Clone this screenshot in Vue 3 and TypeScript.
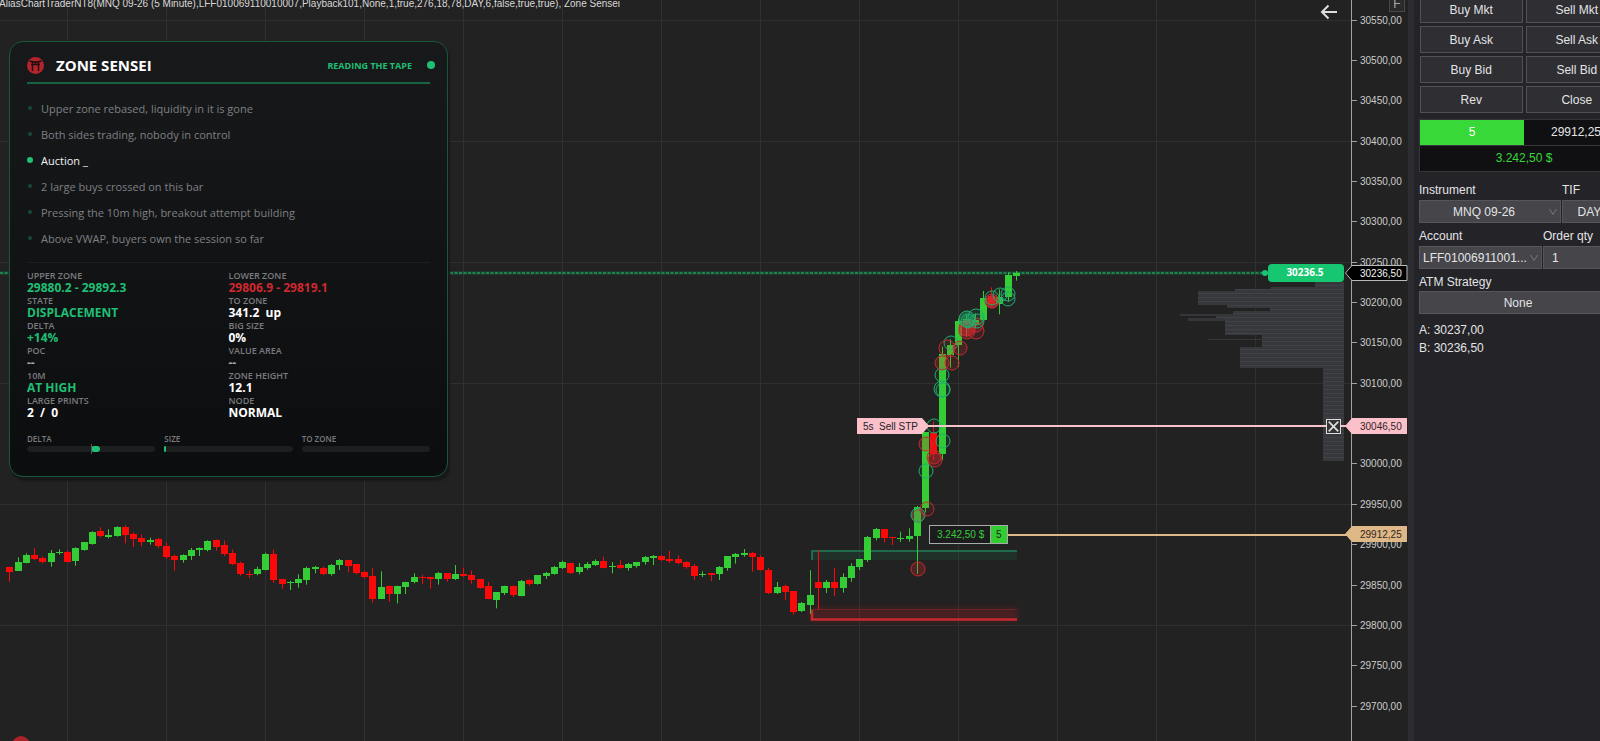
<script setup lang="ts">
import { ref } from 'vue'

type Tone = 'up' | 'down' | 'plain' | 'muted'
interface Bar { i: number; x: number; up: boolean; high: number; top: number; bottom: number; low: number }
interface Print { x: number; y: number; r: number; buy: boolean; fill: number }

/* direction, high, body top, body bottom, low; one entry per bar, in thirds of a pixel below the pane offset */
const paneA = `r 200 201 215 245|g 172 186 212 212|g 160 164 188 190|r 145 164 177 180|r 170 174 186 190|g 150 158 186 200|g 148 156 160 164|r 152 155 186 186|g 142 144 183 197|g 126 126 150 152|g 94 96 132 134|r 82 93 107 112|g 88 104 110 115|g 79 81 107 110|r 76 81 104 130|r 97 101 116 141|r 104 113 126 138|g 113 119 126 134|r 114 118 138 144|r 128 138 172 177|r 164 169 180 212|g 163 164 180 188|g 144 150 167 180|g 142 145 150 168|g 121 122 150 154|r 118 119 141 152|r 122 135 161 168|r 149 158 191 195|r 185 188 222 227|r 212 222 225 234|g 200 206 222 226|g 158 161 209 211|r 149 161 240 248`
const paneB = `r 177 177 192 206|g 182 186 190 210|g 163 177 189 203|g 140 143 180 194|g 138 141 146 160|r 140 143 163 165|g 132 135 163 167|g 117 121 135 150|r 120 120 138 157|r 132 132 160 163|r 152 156 171 176|r 145 168 237 248|g 154 201 237 237|r 197 197 222 245|g 197 197 222 250|g 185 186 200 222|g 160 171 186 190|r 164 172 175 191|r 171 171 177 206|g 156 160 177 194|r 160 160 177 185|g 135 163 178 180|r 143 162 168 171|r 152 165 180 191|r 177 177 203 206|r 186 199 237 238|g 216 216 240 265|g 197 199 219 225|r 197 197 226 231|g 180 183 228 229|r 178 181 192 197|g 165 166 191 194|g 156 160 168 177|g 138 141 162 164|g 122 126 144 147|r 128 129 158 162|g 129 141 155 163|g 126 131 144 149|g 118 122 135 138|r 110 123 143 145|g 126 138 141 160|r 121 135 143 146|g 129 132 144 152|g 126 126 138 143|g 108 111 126 134|g 105 109 114 135|r 106 109 121 123|r 92 118 123 129|r 106 117 129 133|r 123 126 141 146|r 132 138 168 180|g 154 161 165 171|r 160 160 165 183|g 138 141 162 180|g 108 109 144 152|g 99 101 111 131|g 87 100 104 110|r 96 98 111 155|r 106 111 150 152|r 144 150 219 222|g 186 201 219 222|r 194 198 216 239|r 213 213 276 284|g 246 250 273 276|g 151 225 255 281|r 90 186 203 270|g 180 185 204 219|r 144 186 204 228`
const paneC = `g 280 291 325 338|g 250 258 294 305|g 237 237 261 270|g 168 171 240 246|g 144 147 174 181|r 147 147 174 187|r 170 171 175 195|g 155 173 178 186|g 145 168 178 185|g 78 81 167 282`
const paneD = `g 516 516 745 757|r 484 518 582 600|g 260 282 581 600|g 238 256 285 323|g 175 183 255 321|g 165 178 195 230|g 160 180 195 205|g 93 114 181 181|r 82 108 133 140|g 88 112 132 163|g 38 45 112 125|g 33 38 47 62`

const bars: Bar[] = []
for (const [src, offset] of [[paneA, 500], [paneB, 520], [paneC, 480], [paneD, 260]] as [string, number][]) {
  for (const row of src.split('|')) {
    const p = row.split(' ')
    const n = p.slice(1).map((v) => offset + Number(v) / 3)
    const i = bars.length
    bars.push({ i, x: Math.round(9.4 + 8.25 * i), up: p[0] === 'g', high: n[0], top: Math.round(n[1]), bottom: Math.round(n[2]), low: n[3] })
  }
}

const mk = (x: number, y: number, r: number, buy: boolean, fill = 0.06): Print => ({ x, y, r, buy, fill })
const prints: Print[] = [
  mk(934, 426, 7, true), mk(943, 441, 7, true), mk(926, 471, 7, true), mk(942, 375, 7, true),
  mk(942, 389, 8, true), mk(943, 390, 7, true), mk(951, 343, 7, true),
  mk(926, 444, 7, false, 0.25), mk(934, 457, 7, false, 0.3), mk(935, 460, 7, false, 0.2),
  mk(942, 363, 7, false, 0.25), mk(952, 363, 7, false, 0.15), mk(947, 348, 8, false, 0.1), mk(960, 348, 7, false, 0.2),
  mk(967, 328, 8, false, 0.5), mk(967, 331, 8, false, 0.3), mk(976, 331, 8, false, 0.15), mk(976, 325, 7, false, 0.2),
  mk(967, 319, 8, true, 0.4), mk(968, 321, 7, true, 0.3), mk(976, 317, 8, true, 0.1), mk(977, 321, 7, true, 0.1),
  mk(992, 302, 6, false, 0.5), mk(992, 301, 7, false, 0.3), mk(992, 298, 7, true), mk(1000, 295, 7, true),
  mk(1008, 294, 7, true), mk(1008, 299, 7, true),
  mk(918, 516, 6, false, 0.2), mk(918, 515, 7, true, 0.2), mk(927, 509, 7, false, 0.1), mk(918, 569, 7, false, 0.25),
]

/* left edge, top, bottom of every volume-at-price step */
const profile: [number, number, number][] = [
  [1315, 282, 287], [1271, 287, 289], [1235, 289, 291], [1198, 291, 305], [1227, 305, 308], [1270, 308, 311],
  [1233, 311, 316], [1216, 316, 318], [1225, 318, 321], [1225, 321, 335], [1262, 335, 347], [1240, 347, 368], [1323, 368, 461],
]
const spikes: [number, number, number, number][] = [[1180, 314, 1233, 2], [1188, 318, 1225, 3], [1208, 339, 1262, 1]]
const stripes = Array.from({ length: 44 }, (_, i) => 285 + i * 4)

const columns = Array.from({ length: 13 }, (_, i) => 67 + i * 99)
const prices = Array.from({ length: 18 }, (_, i) => ({
  y: Math.round(19.5 + i * 40.36), label: `${30550 - i * 50},00`, grid: i % 3 === 0,
})).filter((p) => p.label !== '30050,00')

const stopLabel = '5s\u00a0 Sell STP'
const messages = [
  { text: 'Upper zone rebased, liquidity in it is gone', live: false },
  { text: 'Both sides trading, nobody in control', live: false },
  { text: 'Auction _', live: true },
  { text: '2 large buys crossed on this bar', live: false },
  { text: 'Pressing the 10m high, breakout attempt building', live: false },
  { text: 'Above VWAP, buyers own the session so far', live: false },
]
const stats: { label: string; value: string; tone: Tone }[] = [
  { label: 'UPPER ZONE', value: '29880.2 - 29892.3', tone: 'up' },
  { label: 'LOWER ZONE', value: '29806.9 - 29819.1', tone: 'down' },
  { label: 'STATE', value: 'DISPLACEMENT', tone: 'up' },
  { label: 'TO ZONE', value: '341.2  up', tone: 'plain' },
  { label: 'DELTA', value: '+14%', tone: 'up' },
  { label: 'BIG SIZE', value: '0%', tone: 'plain' },
  { label: 'POC', value: '--', tone: 'muted' },
  { label: 'VALUE AREA', value: '--', tone: 'muted' },
  { label: '10M', value: 'AT HIGH', tone: 'up' },
  { label: 'ZONE HEIGHT', value: '12.1', tone: 'plain' },
  { label: 'LARGE PRINTS', value: '2  /  0', tone: 'plain' },
  { label: 'NODE', value: 'NORMAL', tone: 'plain' },
]
const gauges = [
  { label: 'DELTA', from: 50, size: 7, tick: true },
  { label: 'SIZE', from: 0, size: 1, tick: false },
  { label: 'TO ZONE', from: 0, size: 0, tick: false },
]
const actions = ['Buy Mkt', 'Sell Mkt', 'Buy Ask', 'Sell Ask', 'Buy Bid', 'Sell Bid', 'Rev', 'Close']
const quantity = ref('1')
</script>

<template>
  <main class="workspace">
    <section class="chart">
      <svg class="plot" viewBox="0 0 1408 741" preserveAspectRatio="xMinYMin slice" aria-label="MNQ 09-26 price chart">
        <defs>
          <filter id="glow" x="-10%" y="-100%" width="120%" height="300%"><feGaussianBlur stdDeviation="3" /></filter>
        </defs>
        <g class="grid">
          <rect v-for="x in columns" :key="x" :x="x" y="0" width="1" height="741" />
          <template v-for="p in prices" :key="p.label">
            <rect v-if="p.grid" x="0" :y="p.y" width="1351" height="1" />
          </template>
        </g>

        <text class="title" x="-1" y="7">AliasChartTraderNT8(MNQ 09-26 (5 Minute),LFF010069110010007,Playback101,None,1,true,276,18,78,DAY,6,false,true,true), Zone Sensei</text>

        <g class="profile">
          <rect v-for="s in profile" :key="s[1]" :x="s[0]" :y="s[1]" :width="1344 - s[0]" :height="s[2] - s[1]" />
          <rect v-for="s in spikes" :key="s[1]" class="spike" :x="s[0]" :y="s[1]" :width="s[2] - s[0]" :height="s[3]" />
          <rect
            v-for="y in stripes" :key="y" class="stripe" :y="y" height="1"
            :x="(profile.find((s) => y >= s[1] && y < s[2]) ?? [1323])[0]"
            :width="1344 - (profile.find((s) => y >= s[1] && y < s[2]) ?? [1323])[0]"
          />
        </g>

        <rect x="0" y="271" width="1265" height="4" fill="#17c671" opacity="0.15" />
        <line x1="0" y1="273" x2="1265" y2="273" stroke="#1c9a5c" stroke-width="1.4" stroke-dasharray="3 1.5" />

        <rect x="811" y="551" width="206" height="9" fill="#17704a" opacity="0.2" />
        <path d="M812 560V551H1017" fill="none" stroke="#1f6a4a" stroke-width="2" />
        <rect x="810" y="608" width="208" height="13" fill="#b01f24" opacity="0.28" filter="url(#glow)" />
        <rect x="811" y="609" width="206" height="1" fill="#8c2428" opacity="0.6" />
        <path d="M812 610V619.500H1017" fill="none" stroke="#c9292f" stroke-width="2.500" />

        <g v-for="b in bars" :key="b.i" :class="b.up ? 'rise' : 'fall'">
          <rect :x="b.x" :y="b.high" width="1" :height="b.low - b.high" />
          <rect :x="b.x - 3" :y="b.top" width="7" :height="Math.max(1, b.bottom - b.top)" />
        </g>
        <circle
          v-for="(p, i) in prints" :key="i" :cx="p.x" :cy="p.y" :r="p.r" stroke-width="1"
          :stroke="p.buy ? '#1fae70' : '#c22b30'" :fill="p.buy ? '#1fae70' : '#e0282e'" :fill-opacity="p.fill"
        />
        <circle cx="21" cy="745" r="9" fill="#a82429" />

        <rect x="926" y="425" width="420" height="2" fill="#f6c3ca" />
        <path d="M857 418H922L929 426L922 434H857Z" fill="#fcc0cb" />
        <text class="dark" x="863" y="430">{{ stopLabel }}</text>

        <rect x="1008" y="534" width="340" height="2" fill="#deb887" />
        <rect x="929.500" y="525.500" width="78" height="18" fill="#1c1c1e" stroke="#aaa" />
        <rect x="990" y="526" width="17" height="17" fill="#32cd32" />
        <path d="M990.500 526V543" stroke="#aaa" />
        <text class="gain" x="937" y="538">3.242,50 $</text>
        <text class="dark" x="996" y="538">5</text>

        <circle cx="1265" cy="273" r="3" fill="#17c671" />
        <rect x="1268" y="264" width="76" height="18" rx="4" fill="#17c671" />
        <text class="tag" x="1305" y="276">30236.5</text>

        <rect x="1351" y="0" width="1" height="741" fill="#a2a2a2" />
        <g v-for="p in prices" :key="p.y" class="scale">
          <rect x="1352" :y="p.y" width="5" height="1" />
          <text x="1360" :y="p.y + 4">{{ p.label }}</text>
        </g>
        <path d="M1345.500 273L1352 265.500H1407V280.500H1352Z" fill="#000" stroke="#bbb" />
        <text class="scale-now" x="1360" y="277">30236,50</text>
        <path d="M1345 426L1352 418H1407V434H1352Z" fill="#fcc0cb" />
        <text class="scale-tag" x="1360" y="430">30046,50</text>
        <path d="M1345 534L1352 526H1407V542H1352Z" fill="#deb887" />
        <text class="scale-tag" x="1360" y="538">29912,25</text>
      </svg>

      <button class="back" type="button" aria-label="Scroll to latest bar">
        <svg viewBox="0 0 18 16"><path d="M17 8H2M8.500 1.500L2 8L8.500 14.500" /></svg>
      </button>
      <button class="fixed-scale" type="button">F</button>
      <button class="cancel" type="button" aria-label="Cancel order">
        <svg viewBox="0 0 15 15"><path d="M2 2L13 13M13 2L2 13" /></svg>
      </button>

      <article class="card">
        <header class="card-head">
          <svg class="logo" viewBox="0 0 17 17">
            <circle cx="8.500" cy="8.500" r="8.500" fill="#b3242b" />
            <path d="M2.500 4Q8.500 6 14.500 4M4 7.500H13M5.500 5V14M11.500 5V14M8.500 5V7.500" fill="none" stroke="#220d10" stroke-width="1.500" />
          </svg>
          <h1>ZONE SENSEI</h1>
          <span class="status">READING THE TAPE</span>
          <i class="pulse"></i>
        </header>
        <ul class="feed">
          <li v-for="m in messages" :key="m.text" :class="{ live: m.live }">{{ m.text }}</li>
        </ul>
        <dl class="stats">
          <div v-for="s in stats" :key="s.label">
            <dt>{{ s.label }}</dt>
            <dd :class="s.tone">{{ s.value }}</dd>
          </div>
        </dl>
        <div class="gauges">
          <div v-for="g in gauges" :key="g.label" class="gauge">
            <span>{{ g.label }}</span>
            <div class="track" :class="{ tick: g.tick }">
              <i v-if="g.size" :style="{ marginLeft: g.from + '%', width: g.size + '%' }"></i>
            </div>
          </div>
        </div>
      </article>
    </section>

    <aside class="trader">
      <form class="trader-body" @submit.prevent>
        <div class="actions">
          <button v-for="a in actions" :key="a" type="button">{{ a }}</button>
        </div>
        <div class="position">
          <span class="size">5</span><span class="entry">29912,25</span>
          <span class="pnl">3.242,50 $</span>
        </div>
        <div class="fields instrument">
          <label for="instrument">Instrument</label>
          <label for="tif">TIF</label>
          <div class="pick">
            <select id="instrument"><option>MNQ 09-26</option></select>
            <svg viewBox="0 0 8 8"><path d="M0.500 1L4 6.500L7.500 1" /></svg>
          </div>
          <div class="pick"><select id="tif"><option>DAY</option></select></div>
        </div>
        <div class="fields account">
          <label for="account">Account</label>
          <label for="qty">Order qty</label>
          <div class="pick">
            <select id="account"><option>LFF01006911001...</option></select>
            <svg viewBox="0 0 8 8"><path d="M0.500 1L4 6.500L7.500 1" /></svg>
          </div>
          <input id="qty" v-model="quantity" type="text" />
        </div>
        <div class="fields atm">
          <label for="atm">ATM Strategy</label>
          <div class="pick"><select id="atm"><option>None</option></select></div>
        </div>
        <p class="quotes">A: 30237,00<br />B: 30236,50</p>
      </form>
    </aside>
  </main>
</template>

<style>
body { margin: 0; background: #222; overflow: hidden; }
</style>

<style scoped>
* { box-sizing: border-box; }
button, input, select { font: inherit; color: inherit; margin: 0; border-radius: 0; }
.workspace { display: flex; height: 100vh; background: #222; font: 12px "Liberation Sans", Arial, sans-serif; color: #e4e4e6; }
.chart { position: relative; flex: 1; min-width: 0; overflow: hidden; }
.plot { display: block; width: 100%; height: 100%; }
.grid rect { fill: #303030; }
.title { font-size: 10px; fill: #d8d8d8; }
.rise { fill: #35cd35; }
.fall { fill: #fb0808; }
.profile rect { fill: #37383c; }
.profile .stripe { fill: #414247; }
.profile .spike { fill: #35363a; }
.dark { font-size: 10px; fill: #222; }
.gain { font-size: 10px; fill: #35cd35; }
.tag { font: bold 10px "Open Sans", sans-serif; fill: #fff; text-anchor: middle; }
.scale rect { fill: #a2a2a2; }
.scale text { font-size: 10px; fill: #ccc; }
.scale-now { font-size: 10px; fill: #f4f4f4; }
.scale-tag { font-size: 10px; fill: #33251f; }

.back, .cancel, .fixed-scale { position: absolute; padding: 0; }
.back svg, .cancel svg { display: block; fill: none; stroke: #ddd; stroke-width: 2; }
.back { top: 4px; right: 70px; width: 18px; height: 16px; border: 0; background: none; }
.fixed-scale { top: -4px; right: 3px; width: 16px; height: 16px; border: 1px solid #48484a; background: #2a2a2c; color: #aaa; line-height: 14px; }
.cancel { top: 419px; right: 67px; width: 15px; height: 15px; border: 1px solid #ddd; background: #333; }
.cancel svg { width: 13px; height: 13px; }

.card {
  position: absolute; top: 41px; left: 9px; width: 439px; padding: 11px 17px 24px 17px;
  border: 1px solid #17573b; border-radius: 14px; background: linear-gradient(#18191b, #0c0d0f);
  box-shadow: 2px 4px 2px #18181a; font-family: "Open Sans", sans-serif;
}
.card-head { display: flex; align-items: center; height: 31px; padding-bottom: 5px; border-bottom: 2px solid #176342; }
.logo { width: 17px; height: 17px; margin-right: 12px; }
h1 { margin: 0; flex: 1; font-size: 15px; line-height: 20px; font-weight: 700; color: #fff; }
.status { font-size: 9px; font-weight: 700; color: #1fbf74; }
.pulse { width: 8px; height: 8px; margin: 0 -5px 0 15px; border-radius: 50%; background: #1fbf74; }
.feed { list-style: none; margin: 0; padding: 11px 0; border-bottom: 1px solid #1d1e20; }
.feed li { display: flex; align-items: center; gap: 8px; height: 26px; font-size: 11px; color: #7f8083; }
.feed li::before { content: ""; width: 4px; height: 4px; margin: 0 1px; border-radius: 50%; background: #174a35; }
.feed .live { color: #f2f2f2; }
.feed .live::before { width: 6px; height: 6px; margin: 0; background: #1fbf74; }
.stats { display: grid; grid-template-columns: 1fr 1fr; margin: 7px 0 0; }
.stats dt { font-size: 9px; line-height: 11px; font-weight: 600; color: #7a7b7f; }
.stats dd { margin: 0; font-size: 12px; line-height: 14px; font-weight: 700; white-space: pre; }
.up { color: #1fbf74; }
.down { color: #cf282e; }
.plain { color: #fff; }
.muted { color: #aaa; }
.gauges { display: grid; grid-template-columns: repeat(3, 1fr); gap: 9px; margin-top: 14px; }
.gauge span { display: block; font-size: 8px; line-height: 10px; font-weight: 600; color: #7a7b7f; }
.track { position: relative; display: flex; height: 6px; margin-top: 2px; border-radius: 3px; background: #1d1e20; }
.track i { border-radius: 3px; background: #1fbf74; }
.tick::before { content: ""; position: absolute; left: 50%; top: -2px; width: 1px; height: 10px; background: #55565a; }

.trader { flex: 0 0 192px; overflow: hidden; padding-left: 5px; border-left: 6px solid #2d2d31; background: #232328; }
.trader-body { width: 210px; margin-top: -4px; }
.actions { display: grid; grid-template-columns: 1fr 1fr; gap: 3px; padding: 0 1px; }
.actions button { height: 27px; padding: 0; border: 1px solid #505055; background: #2e2e33; }
.position { display: grid; grid-template-columns: 1fr 1fr; margin-top: 6px; border: 1px solid #37373b; background: #101012; text-align: center; line-height: 25px; }
.size { background: #37d837; color: #fff; }
.pnl { grid-column: 1 / 3; border-top: 1px solid #37373b; color: #37d837; }
.fields { display: grid; column-gap: 1px; }
.fields label { line-height: 14px; }
.instrument { grid-template-columns: 142px 1fr; margin-top: 11px; row-gap: 3px; }
.account { grid-template-columns: 123px 1fr; margin-top: 6px; row-gap: 3px; }
.atm { margin-top: 6px; row-gap: 2px; }
.pick { position: relative; }
.pick svg { position: absolute; right: 4px; top: 8px; width: 8px; height: 8px; fill: none; stroke: #77777c; }
select, input { display: block; width: 100%; height: 23px; padding: 0 12px 0 0; border: 1px solid #55555a; background: #45454a; appearance: none; text-align-last: center; }
input { padding: 0 8px; text-align-last: left; }
#account { padding: 0 3px; text-align-last: left; }
.quotes { margin: 7px 0 0; line-height: 18px; }
</style>
